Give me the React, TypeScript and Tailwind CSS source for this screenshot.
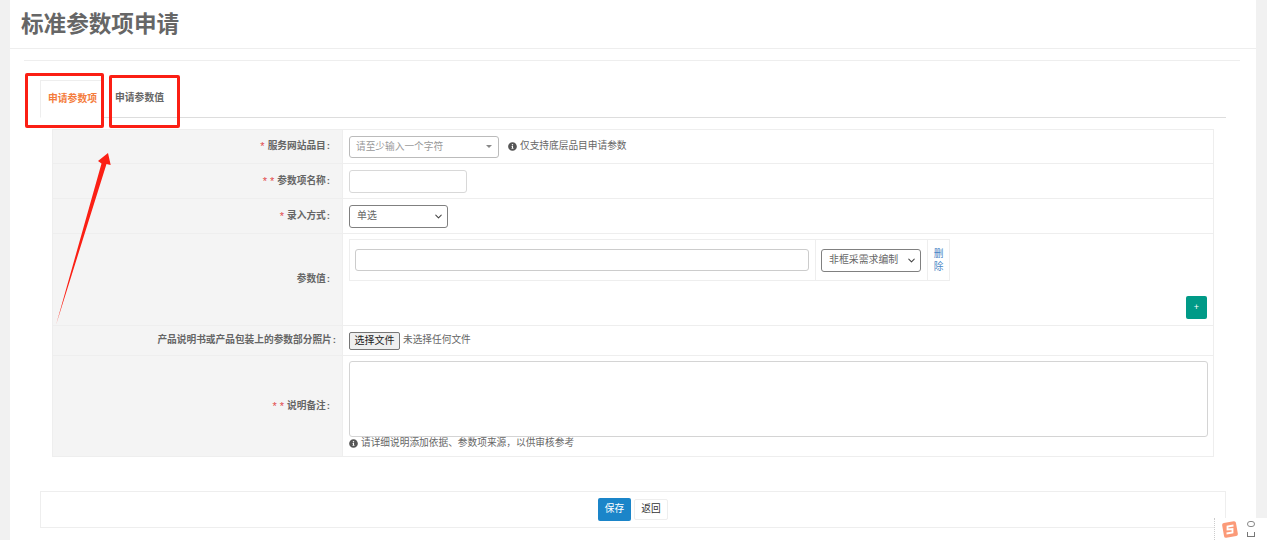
import React from "react";
import { FaInfoCircle } from "react-icons/fa";
import { ChevronDown } from "lucide-react";

const Star = () => <span className="text-[#e24a4a] text-[11px] font-normal mr-[3px]">*</span>;

const Row = ({ label, stars = 0, heightClass, labelPad = "pr-[12px]", children, last }: {
  label: string;
  stars?: number;
  heightClass: string;
  labelPad?: string;
  children: React.ReactNode;
  last?: boolean;
}) => (
  <div className={`flex ${heightClass} ${last ? "" : "border-b border-[#eeeeee]"}`}>
    <div className={`w-[290px] shrink-0 flex items-center justify-end ${labelPad} bg-[#f4f4f4] border-r border-[#eeeeee] text-[9.7px] font-bold text-[#666666]`}>
      {stars > 0 && <Star />}
      {stars > 1 && <Star />}
      <span>{label}</span>
      <span className="ml-[1px]">:</span>
    </div>
    <div className="flex-1 min-w-0 pl-[6px] pr-[5px] text-[9.7px] text-[#666666]">{children}</div>
  </div>
);

const Select = ({ widthClass, text }: { widthClass: string; text: string }) => (
  <div className={`relative ${widthClass} h-[23px]`}>
    <select className="appearance-none w-full h-full border border-[#808080] rounded-[3px] bg-white pl-[7px] pt-[1px] text-[9.9px] text-[#666666]">
      <option>{text}</option>
    </select>
    <ChevronDown className="absolute right-[4px] top-[6px] w-[11px] h-[11px] text-[#444444] pointer-events-none" strokeWidth={2.2} />
  </div>
);

export default function App() {
  return (
    <div
      className="relative h-[540px] overflow-hidden bg-[#f1f1f1] px-[10px] pr-[11px]"
      style={{ fontFamily: '"Liberation Sans", "Noto Sans CJK SC", sans-serif' }}
    >
      <div className="h-full bg-white">
        <div className="h-[49px] border-b border-[#eeeeee] pl-[11px] flex items-center">
          <h1 className="text-[22.6px] font-bold text-[#666666] leading-none pt-[3px]">标准参数项申请</h1>
        </div>

        <div className="ml-[14px] mr-[16px] mt-[11px] border-t border-[#eeeeee] pt-[12px]">
          <div className="mx-[16px] mr-[14px] h-[45px] flex items-end border-b border-[#dddddd] text-[9.8px] font-bold">
            <div className="w-[62px] h-[38px] mb-[-1px] border border-b-white border-[#eeeeee] text-[#f47c3c] flex items-center pl-[7px]">
              申请参数项
            </div>
            <div className="ml-[13px] h-[37px] text-[#666666] flex items-center">申请参数值</div>
          </div>

          <div className="ml-[28px] mr-[26px] mt-[11px] border border-[#eeeeee]">
            <Row label="服务网站品目" stars={1} heightClass="h-[34px]">
              <div className="flex items-center h-full">
                <div className="w-[150px] h-[22px] border border-[#bbbbbb] rounded-[3px] flex items-center justify-between pl-[6px] pr-[6px] text-[#999999]">
                  <span className="pt-[1px]">请至少输入一个字符</span>
                  <span className="w-0 h-0 border-x-[3px] border-x-transparent border-t-[3px] border-t-[#888888]" />
                </div>
                <FaInfoCircle className="ml-[9px] mr-[3px] w-[9px] h-[9px] text-[#555555]" />
                <span>仅支持底层品目申请参数</span>
              </div>
            </Row>
            <Row label="参数项名称" stars={2} heightClass="h-[35px]">
              <div className="flex items-center h-full">
                <input className="w-[118px] h-[23px] border border-[#d8d8d8] rounded-[3px] bg-white" />
              </div>
            </Row>
            <Row label="录入方式" stars={1} heightClass="h-[35px]">
              <div className="flex items-center h-full">
                <Select widthClass="w-[99px]" text="单选" />
              </div>
            </Row>
            <Row label="参数值" heightClass="h-[92px]">
              <div className="flex flex-col h-full">
                <div className="mt-[5px] w-[601px] h-[42px] border border-[#eeeeee] flex items-center">
                  <div className="w-[466px] h-full shrink-0 flex items-center pl-[5px] pr-[6px] border-r border-[#eeeeee]">
                    <input className="w-full h-[22px] border border-[#cccccc] rounded-[3px] bg-white" />
                  </div>
                  <div className="w-[112px] h-full shrink-0 flex items-center px-[5px] border-r border-[#eeeeee]">
                    <Select widthClass="w-[100px]" text="非框采需求编制" />
                  </div>
                  <a className="flex-1 text-center text-[#4a86c5] leading-[13px] px-[5px]">删除</a>
                </div>
                <div className="flex justify-end mt-[15px] mr-[1px]">
                  <button className="w-[21px] h-[23px] rounded-[2px] bg-[#009a87] text-white text-[9px] leading-none">+</button>
                </div>
              </div>
            </Row>
            <Row label="产品说明书或产品包装上的参数部分照片" heightClass="h-[30px]" labelPad="pr-[6px]">
              <div className="flex items-center h-full">
                <button className="w-[51px] h-[18px] border border-[#767676] rounded-[2px] bg-[#efefef] text-[10px] text-[#222222] leading-none">
                  选择文件
                </button>
                <span className="ml-[3px]">未选择任何文件</span>
              </div>
            </Row>
            <Row label="说明备注" stars={2} heightClass="h-[100px]" last>
              <textarea className="block mt-[5px] w-full h-[76px] border border-[#d4d4d4] rounded-[3px] bg-white resize-none" />
              <div className="flex items-center h-[13px]">
                <FaInfoCircle className="mr-[3px] w-[9px] h-[9px] text-[#555555]" />
                <span>请详细说明添加依据、参数项来源，以供审核参考</span>
              </div>
            </Row>
          </div>

          <div className="ml-[16px] mr-[14px] mt-[34px] h-[37px] border border-[#eeeeee] flex items-center justify-center gap-[3px] text-[9.7px]">
            <button className="w-[33px] h-[23px] bg-[#1b85c9] rounded-[2px] text-white">保存</button>
            <button className="w-[34px] h-[21px] bg-white border border-[#eeeeee] rounded-[2px] text-[#333333]">返回</button>
          </div>
        </div>
      </div>

      {/* annotations drawn on top of the screenshot */}
      <div className="absolute left-[25px] top-[73px] w-[79px] h-[55px] border-[3px] border-[#fb1f14] rounded-[2px]" />
      <div className="absolute left-[109px] top-[75px] w-[71px] h-[53px] border-[3px] border-[#fb1f14] rounded-[2px]" />
      <svg className="absolute left-[50px] top-[148px]" width="66" height="182" viewBox="0 0 66 182">
        <polygon points="6,177 51.5,15.5 48,13 58,5 60.7,17 56.5,16" fill="#fb1f14" />
      </svg>

      {/* input method toolbar */}
      <div className="absolute left-[1214px] top-[518px] w-[53px] h-[22px] bg-white border-l border-dotted border-[#cccccc] flex items-start">
        <svg className="ml-[6px] mt-[2px]" width="18" height="19" viewBox="0 0 18 19">
          <rect x="2" y="2" width="14" height="15" rx="2" fill="#fb9a78" transform="rotate(-10 9 9.5)" />
          <path d="M12.5 5.5 L6.5 6.5 L6.5 9.5 L11.5 9 L11.5 12.5 L5.5 13.5" fill="none" stroke="#ffffff" strokeWidth="1.8" />
        </svg>
        <div className="ml-[8px] mt-[3px] flex flex-col items-center gap-[5px]">
          <span className="block w-[8px] h-[6px] rounded-full border border-[#888888]" />
          <span className="block w-[8px] h-[5px] border-x border-b border-[#777777]" />
        </div>
      </div>
    </div>
  );
}
